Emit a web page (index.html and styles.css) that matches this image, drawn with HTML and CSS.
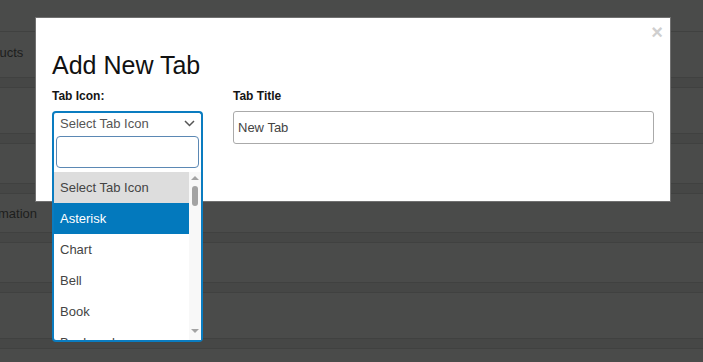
FILE: index.html
```html
<!doctype html>
<html lang="en">
  <head>
    <meta charset="UTF-8" />
    <meta name="viewport" content="width=device-width, initial-scale=1.0" />
    <title>Add New Tab</title>
    <link rel="stylesheet" href="styles.css">
  </head>
  <body>
    <!-- page behind the modal backdrop -->
    <div class="page">
      <div class="page-top"></div>
      <div class="page-row row-tall"><span class="row-label">Products</span></div>
      <div class="band"></div>
      <div class="page-row row-tall"></div>
      <div class="band"></div>
      <div class="page-row"></div>
      <div class="band"></div>
      <div class="page-row row-short"><span class="row-label">Information</span></div>
      <div class="band"></div>
      <div class="page-row"></div>
      <div class="band"></div>
      <div class="page-row row-tall"></div>
      <div class="band"></div>
      <div class="page-row"></div>
    </div>

    <div class="modal">
      <div class="modal-header">
        <button type="button" class="close">&times;</button>
      </div>
      <h1>Add New Tab</h1>

      <div class="form-grid">
        <div class="form-group">
          <label>Tab Icon:</label>
          <div class="select2">
            <div class="select2-selection">
              <span>Select Tab Icon</span>
              <svg class="chevron" width="11" height="7" viewBox="0 0 11 7">
                <polyline points="1,1 5.5,5.5 10,1" fill="none" stroke="#555" stroke-width="1.5" />
              </svg>
            </div>
            <div class="select2-dropdown">
              <div class="search-wrap">
                <input type="text" class="search" />
              </div>
              <div class="results">
                <ul class="options">
                  <li class="option option-hover">Select Tab Icon</li>
                  <li class="option option-selected">Asterisk</li>
                  <li class="option">Chart</li>
                  <li class="option">Bell</li>
                  <li class="option">Book</li>
                  <li class="option">Bookmark</li>
                </ul>
                <div class="scrollbar">
                  <span class="arrow-up"></span>
                  <span class="thumb"></span>
                  <span class="arrow-down"></span>
                </div>
              </div>
            </div>
          </div>
        </div>

        <div class="form-group">
          <label for="tab-title">Tab Title</label>
          <input type="text" id="tab-title" class="text-input" value="New Tab" />
        </div>
      </div>
    </div>
  </body>
</html>
```

FILE: styles.css
```css
* {
  margin: 0;
  padding: 0;
  box-sizing: border-box;
}

body {
  font-family: "Liberation Sans", Arial, sans-serif;
  background: #4a4b4a;
  width: 703px;
  height: 362px;
  overflow: hidden;
  position: relative;
}

/* background page */
.page {
  display: flex;
  flex-direction: column;
}

.page-top {
  height: 32px;
  border-bottom: 1px solid #404140;
}

.page-row {
  height: 39px;
  display: flex;
  align-items: center;
  margin-left: -28px;
}

.row-tall {
  height: 45px;
  padding-bottom: 4px;
}

.row-short {
  height: 38px;
}

.row-label {
  font-size: 13px;
  color: #1d1e1d;
}

.band {
  height: 11px;
  background: #464746;
  border-top: 1px solid #404140;
  border-bottom: 1px solid #404140;
}

/* modal */
.modal {
  position: absolute;
  left: 35px;
  top: 17px;
  width: 636px;
  height: 185px;
  background: #fff;
  border: 1px solid #707070;
  padding: 0 16px;
}

.modal-header {
  display: flex;
  justify-content: flex-end;
  align-items: flex-start;
  height: 32px;
  margin-right: -9px;
}

.close {
  border: none;
  background: none;
  margin-top: 4px;
  font-family: "Liberation Sans", Arial, sans-serif;
  font-size: 20px;
  line-height: 20px;
  font-weight: bold;
  color: #cfcfcf;
  cursor: pointer;
}

.modal h1 {
  font-size: 25px;
  line-height: 30px;
  font-weight: normal;
  color: #111;
}

.form-grid {
  display: grid;
  grid-template-columns: 151px 1fr;
  gap: 30px;
  margin-top: 9px;
}

.form-group {
  display: flex;
  flex-direction: column;
}

.form-group label {
  font-size: 12px;
  line-height: 14px;
  font-weight: bold;
  color: #151515;
  margin-bottom: 8px;
}

.text-input {
  height: 33px;
  border: 1px solid #aaa;
  border-radius: 3px;
  padding: 0 4px;
  font-family: "Liberation Sans", Arial, sans-serif;
  font-size: 13px;
  color: #444;
}

/* select2-like dropdown */
.select2 {
  position: relative;
  width: 151px;
}

.select2-selection {
  height: 21px;
  border: 2px solid #0a7cc0;
  border-bottom: none;
  border-radius: 4px 4px 0 0;
  padding: 1px 6px 0 6px;
  display: flex;
  align-items: center;
  justify-content: space-between;
  font-size: 13px;
  line-height: 19px;
  color: #555;
}

.select2-dropdown {
  position: absolute;
  top: 100%;
  left: 0;
  width: 151px;
  background: #fff;
  border: 2px solid #0a7cc0;
  border-top: none;
  border-radius: 0 0 4px 4px;
  z-index: 2;
}

.search-wrap {
  padding: 4px 2px;
}

.search {
  display: block;
  width: 100%;
  height: 32px;
  border: 1px solid #5b88b4;
  border-radius: 4px;
}

.results {
  display: flex;
  height: 168px;
}

.options {
  list-style: none;
  flex: 1;
  overflow: hidden;
}

.option {
  height: 31px;
  line-height: 31px;
  padding-left: 6px;
  font-size: 13px;
  color: #444;
}

.option-hover {
  background: #ddd;
}

.option-selected {
  background: #0379bd;
  color: #fff;
}

.scrollbar {
  width: 12px;
  background: #f8f8f8;
  display: flex;
  flex-direction: column;
  align-items: center;
  padding: 4px 0 7px;
}

.arrow-up,
.arrow-down {
  width: 0;
  height: 0;
  border-left: 4px solid transparent;
  border-right: 4px solid transparent;
}

.arrow-up {
  border-bottom: 4px solid #a3a3a3;
}

.arrow-down {
  margin-top: auto;
  border-top: 4px solid #a3a3a3;
}

.thumb {
  width: 6px;
  height: 20px;
  margin-top: 6px;
  border-radius: 3px;
  background: #a3a3a3;
}
```
